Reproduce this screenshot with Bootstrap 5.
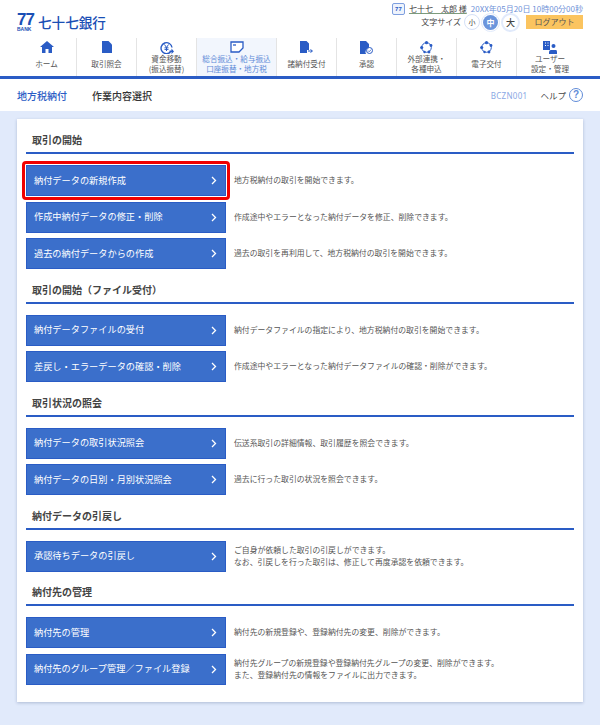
<!DOCTYPE html>
<html lang="ja">
<head>
<meta charset="UTF-8">
<meta name="viewport" content="width=device-width">
<link href="https://cdn.jsdelivr.net/npm/bootstrap@5.3.3/dist/css/bootstrap.min.css" rel="stylesheet">
<title>作業内容選択</title>
<style>
  body { font-family: "Noto Sans CJK JP", "Noto Sans", sans-serif; font-size: 8px; color: #444; background: #e1eafb; width: 600px; height: 725px; overflow: hidden; }
  .top-area { background: #fff; height: 79px; border-bottom: 3px solid #2a5cc5; }
  .top-row { height: 38px; padding: 0 17px; }
  .logo-mark { color: #1a4fb5; width: 17px; line-height: 1; margin-top: 5px; }
  .logo-num { font: 700 17px/14px "Liberation Sans", sans-serif; letter-spacing: -1px; display: block; }
  .logo-bank { font: 700 5px/5px "Liberation Sans", sans-serif; display: block; }
  .logo-name { color: #1a4fb5; font-size: 13.6px; font-weight: 500; line-height: 1; margin-top: 8px; }
  .user-line { font-size: 8px; line-height: 10px; color: #6f92d8; height: 13px; }
  .user-name { color: #444; font-size: 8px; text-decoration: underline; text-decoration-color: #7d9b7d; }
  .user-badge { width: 13px; height: 12px; border: 1px solid #7f9fdf; border-radius: 2px; font: 700 6px/10px "Liberation Sans", sans-serif; color: #2a5cc5; text-align: center; background: #eef3fc; }
  .size-row { height: 18px; gap: 5px; }
  .size-label { font-size: 8px; color: #444; }
  .size-btn { width: 12px; height: 12px; border-radius: 50%; outline: 1px solid #d5e1f7; outline-offset: 1px; background: #fff; font-size: 7px; line-height: 12px; text-align: center; color: #444; }
  .size-btn.is-on { width: 15px; height: 15px; background: #6b95dc; outline-color: #e1eafb; color: #fff; font-weight: 700; font-size: 8px; line-height: 15px; }
  .size-btn.is-big { width: 15px; height: 15px; font-size: 9px; line-height: 15px; font-weight: 500; outline-width: 2px; outline-offset: 0; outline-color: #e1eafb; }
  .logout-btn { width: 57px; height: 14px; background: #fbc45f; color: #555; font-size: 8px; line-height: 14px; text-align: center; margin-left: 3px; }
  .gnav { height: 38px; padding: 0 17px 0 17px; }
  .gnav-item { width: 60px; height: 38px; text-align: center; border-right: 1px solid #e4e4e4; font-size: 7.6px; line-height: 10px; color: #555; flex: none; padding-top: 3px; }
  .gnav-item.is-wide { width: 80px; background: #f2f6fd; color: #5f8bd8; }
  .gnav-item.is-last { border-right: 0; width: 66px; }
  .gnav-icon { height: 13px; }
  .gnav-text { height: 20px; }
  .gnav-item svg { display: block; }
  .crumb-bar { background: #fff; height: 32px; padding: 0 17px; }
  .crumb-main { color: #2a5cc5; font-size: 10px; font-weight: 500; width: 75px; }
  .crumb-sub { color: #333; font-size: 10px; font-weight: 500; }
  .screen-id { color: #8aa8e4; font: 8px "Noto Sans", sans-serif; letter-spacing: .3px; }
  .help-text { font-size: 8.5px; color: #444; margin: 0 3px 0 13px; }
  .help-mark { width: 14px; height: 14px; border: 1.5px solid #5f8bd8; border-radius: 50%; color: #5f8bd8; font: 700 10px/11px "Liberation Sans", sans-serif; text-align: center; }
  .main-panel { margin: 8px 17px 0; width: 566px; height: 583px; background: #fff; padding: .5px 9px 0; box-shadow: 0 1px 3px rgba(60, 80, 130, .3); }
  .sect-title { color: #444; font-size: 10px; font-weight: 700; height: 34.5px; line-height: 1; padding: 15.5px 6px 0; border-bottom: 2px solid #2a5cc5; margin-bottom: 11px; }
  .menu-row { height: 31px; margin-bottom: 5.5px; }
  .menu-row:last-child { margin-bottom: 0; }
  .menu-btn { width: 200px; height: 31px; flex: none; background: #3b6fcb; border: 1px solid #2a5cc5; color: #fff; font-size: 9.2px; padding: 0 8px 0 7px; position: relative; }
  .menu-btn.is-marked::after { content: ""; position: absolute; inset: -5px; border: 3px solid #f00000; border-radius: 4px; }
  .menu-btn svg { flex: none; }
  .menu-desc { margin-left: 8px; font-size: 7.85px; line-height: 12.5px; color: #555; }
</style>
</head>
<body>
<div class="top-area">
  <div class="top-row d-flex justify-content-between">
    <div class="d-flex align-items-start gap-1 pt-2">
      <div class="logo-mark"><span class="logo-num">77</span><span class="logo-bank">BANK</span></div>
      <div class="logo-name">七十七銀行</div>
    </div>
    <div class="d-flex flex-column align-items-end">
      <div class="user-line d-flex align-items-center gap-1 pt-1">
        <span class="user-badge">77</span><span class="user-name">七十七　太郎 様</span><span>20XX年05月20日 10時00分00秒</span>
      </div>
      <div class="size-row d-flex align-items-center">
        <span class="size-label">文字サイズ</span>
        <span class="size-btn">小</span><span class="size-btn is-on">中</span><span class="size-btn is-big">大</span>
        <span class="logout-btn">ログアウト</span>
      </div>
    </div>
  </div>
  <nav class="gnav d-flex">
    <div class="gnav-item d-flex flex-column align-items-center">
      <div class="gnav-icon"><svg width="14" height="12" viewBox="0 0 14 12"><path d="M7 0 14 6h-2v6H8.500V8h-3v4H2V6H0z" fill="#2a5cc5"/></svg></div>
      <div class="gnav-text d-flex align-items-center">ホーム</div>
    </div>
    <div class="gnav-item d-flex flex-column align-items-center">
      <div class="gnav-icon"><svg width="10" height="12" viewBox="0 0 10 12"><path d="M0 0h6.500L10 3.500V12H0z" fill="#2a5cc5"/></svg></div>
      <div class="gnav-text d-flex align-items-center">取引照会</div>
    </div>
    <div class="gnav-item d-flex flex-column align-items-center">
      <div class="gnav-icon"><svg width="14" height="13" viewBox="0 0 14 13"><path d="M10.500 11A5.500 5.500 0 1 1 12 6.500" fill="none" stroke="#2a5cc5" stroke-width="1.400"/><path d="M4.500 3.500 6.500 6.500 8.500 3.500M6.500 6.500V10M4.500 6.800h4M4.500 8.400h4" fill="none" stroke="#2a5cc5"/><path d="M9.500 9.500h2V7.500l2.500 3-2.500 2.500v-2h-2z" fill="#2a5cc5"/></svg></div>
      <div class="gnav-text d-flex align-items-center">資金移動<br>(振込振替)</div>
    </div>
    <div class="gnav-item is-wide d-flex flex-column align-items-center">
      <div class="gnav-icon"><svg width="14" height="12" viewBox="0 0 14 12"><path d="M1 1h12v6l-4 4H1z" fill="#fff" stroke="#2a5cc5" stroke-width="1.300"/><path d="M3 4h3" stroke="#2a5cc5" stroke-width="1.300"/></svg></div>
      <div class="gnav-text d-flex align-items-center">総合振込・給与振込<br>口座振替・地方税</div>
    </div>
    <div class="gnav-item d-flex flex-column align-items-center">
      <div class="gnav-icon"><svg width="13" height="12" viewBox="0 0 13 12"><path d="M0 0h6.500L9 2.500V9H7v3H0z" fill="#2a5cc5"/><path d="M8 10h4M10.500 8.500 12.500 10l-2 1.500" fill="none" stroke="#2a5cc5"/></svg></div>
      <div class="gnav-text d-flex align-items-center">諸納付受付</div>
    </div>
    <div class="gnav-item d-flex flex-column align-items-center">
      <div class="gnav-icon"><svg width="13" height="13" viewBox="0 0 13 13"><path d="M0 0h6L9 3v4a4 4 0 0 0-3 6H0z" fill="#2a5cc5"/><circle cx="9.500" cy="9.500" r="3" fill="#fff" stroke="#2a5cc5"/><path d="M8 9.500 9.200 10.700 11 8.700" fill="none" stroke="#2a5cc5" stroke-width=".8"/></svg></div>
      <div class="gnav-text d-flex align-items-center">承認</div>
    </div>
    <div class="gnav-item d-flex flex-column align-items-center">
      <div class="gnav-icon"><svg width="13" height="13" viewBox="0 0 13 13"><circle cx="6.500" cy="6.500" r="4.800" fill="none" stroke="#2a5cc5" stroke-width="1"/><circle cx="6.500" cy="1.700" r="1.600" fill="#2a5cc5"/><circle cx="1.700" cy="6.500" r="1.600" fill="#2a5cc5"/><circle cx="11" cy="4.500" r="1.400" fill="#2a5cc5"/><circle cx="9" cy="11" r="1.400" fill="#2a5cc5"/><circle cx="4.500" cy="11" r="1.200" fill="#2a5cc5"/></svg></div>
      <div class="gnav-text d-flex align-items-center">外部連携・<br>各種申込</div>
    </div>
    <div class="gnav-item d-flex flex-column align-items-center">
      <div class="gnav-icon"><svg width="13" height="13" viewBox="0 0 13 13"><circle cx="6.500" cy="6.500" r="4.800" fill="none" stroke="#2a5cc5" stroke-width="1"/><circle cx="6.500" cy="1.700" r="1.600" fill="#2a5cc5"/><circle cx="1.700" cy="6.500" r="1.600" fill="#2a5cc5"/><circle cx="11" cy="4.500" r="1.400" fill="#2a5cc5"/><circle cx="9" cy="11" r="1.400" fill="#2a5cc5"/><circle cx="4.500" cy="11" r="1.200" fill="#2a5cc5"/></svg></div>
      <div class="gnav-text d-flex align-items-center">電子交付</div>
    </div>
    <div class="gnav-item is-last d-flex flex-column align-items-center">
      <div class="gnav-icon"><svg width="14" height="13" viewBox="0 0 14 13"><path d="M0 0h7v9H0z" fill="#2a5cc5"/><circle cx="10.500" cy="5" r="2" fill="#2a5cc5"/><path d="M6 13v-2q0-2 2-2h5q1 0 1 2v2z" fill="#2a5cc5"/><path d="M2 2h1M4.500 2h1M2 4.500h1M4.500 4.500h1" stroke="#fff"/></svg></div>
      <div class="gnav-text d-flex align-items-center">ユーザー<br>設定・管理</div>
    </div>
  </nav>
</div>
<div class="crumb-bar d-flex align-items-center">
  <div class="crumb-main">地方税納付</div>
  <div class="crumb-sub">作業内容選択</div>
  <div class="screen-id ms-auto">BCZN001</div>
  <div class="help-text">ヘルプ</div>
  <div class="help-mark">?</div>
</div>
<div class="main-panel">
  <div class="sect-block">
    <div class="sect-title">取引の開始</div>
    <div class="menu-row d-flex align-items-center">
      <div class="menu-btn is-marked d-flex align-items-center justify-content-between"><span>納付データの新規作成</span><svg width="6" height="9" viewBox="0 0 6 9"><path d="M1 1 4.500 4.500 1 8" fill="none" stroke="#fff" stroke-width="1.300"/></svg></div>
      <div class="menu-desc">地方税納付の取引を開始できます。</div>
    </div>
    <div class="menu-row d-flex align-items-center">
      <div class="menu-btn d-flex align-items-center justify-content-between"><span>作成中納付データの修正・削除</span><svg width="6" height="9" viewBox="0 0 6 9"><path d="M1 1 4.500 4.500 1 8" fill="none" stroke="#fff" stroke-width="1.300"/></svg></div>
      <div class="menu-desc">作成途中やエラーとなった納付データを修正、削除できます。</div>
    </div>
    <div class="menu-row d-flex align-items-center">
      <div class="menu-btn d-flex align-items-center justify-content-between"><span>過去の納付データからの作成</span><svg width="6" height="9" viewBox="0 0 6 9"><path d="M1 1 4.500 4.500 1 8" fill="none" stroke="#fff" stroke-width="1.300"/></svg></div>
      <div class="menu-desc">過去の取引を再利用して、地方税納付の取引を開始できます。</div>
    </div>
  </div>
  <div class="sect-block">
    <div class="sect-title">取引の開始（ファイル受付）</div>
    <div class="menu-row d-flex align-items-center">
      <div class="menu-btn d-flex align-items-center justify-content-between"><span>納付データファイルの受付</span><svg width="6" height="9" viewBox="0 0 6 9"><path d="M1 1 4.500 4.500 1 8" fill="none" stroke="#fff" stroke-width="1.300"/></svg></div>
      <div class="menu-desc">納付データファイルの指定により、地方税納付の取引を開始できます。</div>
    </div>
    <div class="menu-row d-flex align-items-center">
      <div class="menu-btn d-flex align-items-center justify-content-between"><span>差戻し・エラーデータの確認・削除</span><svg width="6" height="9" viewBox="0 0 6 9"><path d="M1 1 4.500 4.500 1 8" fill="none" stroke="#fff" stroke-width="1.300"/></svg></div>
      <div class="menu-desc">作成途中やエラーとなった納付データファイルの確認・削除ができます。</div>
    </div>
  </div>
  <div class="sect-block">
    <div class="sect-title">取引状況の照会</div>
    <div class="menu-row d-flex align-items-center">
      <div class="menu-btn d-flex align-items-center justify-content-between"><span>納付データの取引状況照会</span><svg width="6" height="9" viewBox="0 0 6 9"><path d="M1 1 4.500 4.500 1 8" fill="none" stroke="#fff" stroke-width="1.300"/></svg></div>
      <div class="menu-desc">伝送系取引の詳細情報、取引履歴を照会できます。</div>
    </div>
    <div class="menu-row d-flex align-items-center">
      <div class="menu-btn d-flex align-items-center justify-content-between"><span>納付データの日別・月別状況照会</span><svg width="6" height="9" viewBox="0 0 6 9"><path d="M1 1 4.500 4.500 1 8" fill="none" stroke="#fff" stroke-width="1.300"/></svg></div>
      <div class="menu-desc">過去に行った取引の状況を照会できます。</div>
    </div>
  </div>
  <div class="sect-block">
    <div class="sect-title">納付データの引戻し</div>
    <div class="menu-row d-flex align-items-center">
      <div class="menu-btn d-flex align-items-center justify-content-between"><span>承認待ちデータの引戻し</span><svg width="6" height="9" viewBox="0 0 6 9"><path d="M1 1 4.500 4.500 1 8" fill="none" stroke="#fff" stroke-width="1.300"/></svg></div>
      <div class="menu-desc">ご自身が依頼した取引の引戻しができます。<br>なお、引戻しを行った取引は、修正して再度承認を依頼できます。</div>
    </div>
  </div>
  <div class="sect-block">
    <div class="sect-title">納付先の管理</div>
    <div class="menu-row d-flex align-items-center">
      <div class="menu-btn d-flex align-items-center justify-content-between"><span>納付先の管理</span><svg width="6" height="9" viewBox="0 0 6 9"><path d="M1 1 4.500 4.500 1 8" fill="none" stroke="#fff" stroke-width="1.300"/></svg></div>
      <div class="menu-desc">納付先の新規登録や、登録納付先の変更、削除ができます。</div>
    </div>
    <div class="menu-row d-flex align-items-center">
      <div class="menu-btn d-flex align-items-center justify-content-between"><span>納付先のグループ管理／ファイル登録</span><svg width="6" height="9" viewBox="0 0 6 9"><path d="M1 1 4.500 4.500 1 8" fill="none" stroke="#fff" stroke-width="1.300"/></svg></div>
      <div class="menu-desc">納付先グループの新規登録や登録納付先グループの変更、削除ができます。<br>また、登録納付先の情報をファイルに出力できます。</div>
    </div>
  </div>
</div>
<script src="https://cdn.jsdelivr.net/npm/bootstrap@5.3.3/dist/js/bootstrap.bundle.min.js"></script>
</body>
</html>
